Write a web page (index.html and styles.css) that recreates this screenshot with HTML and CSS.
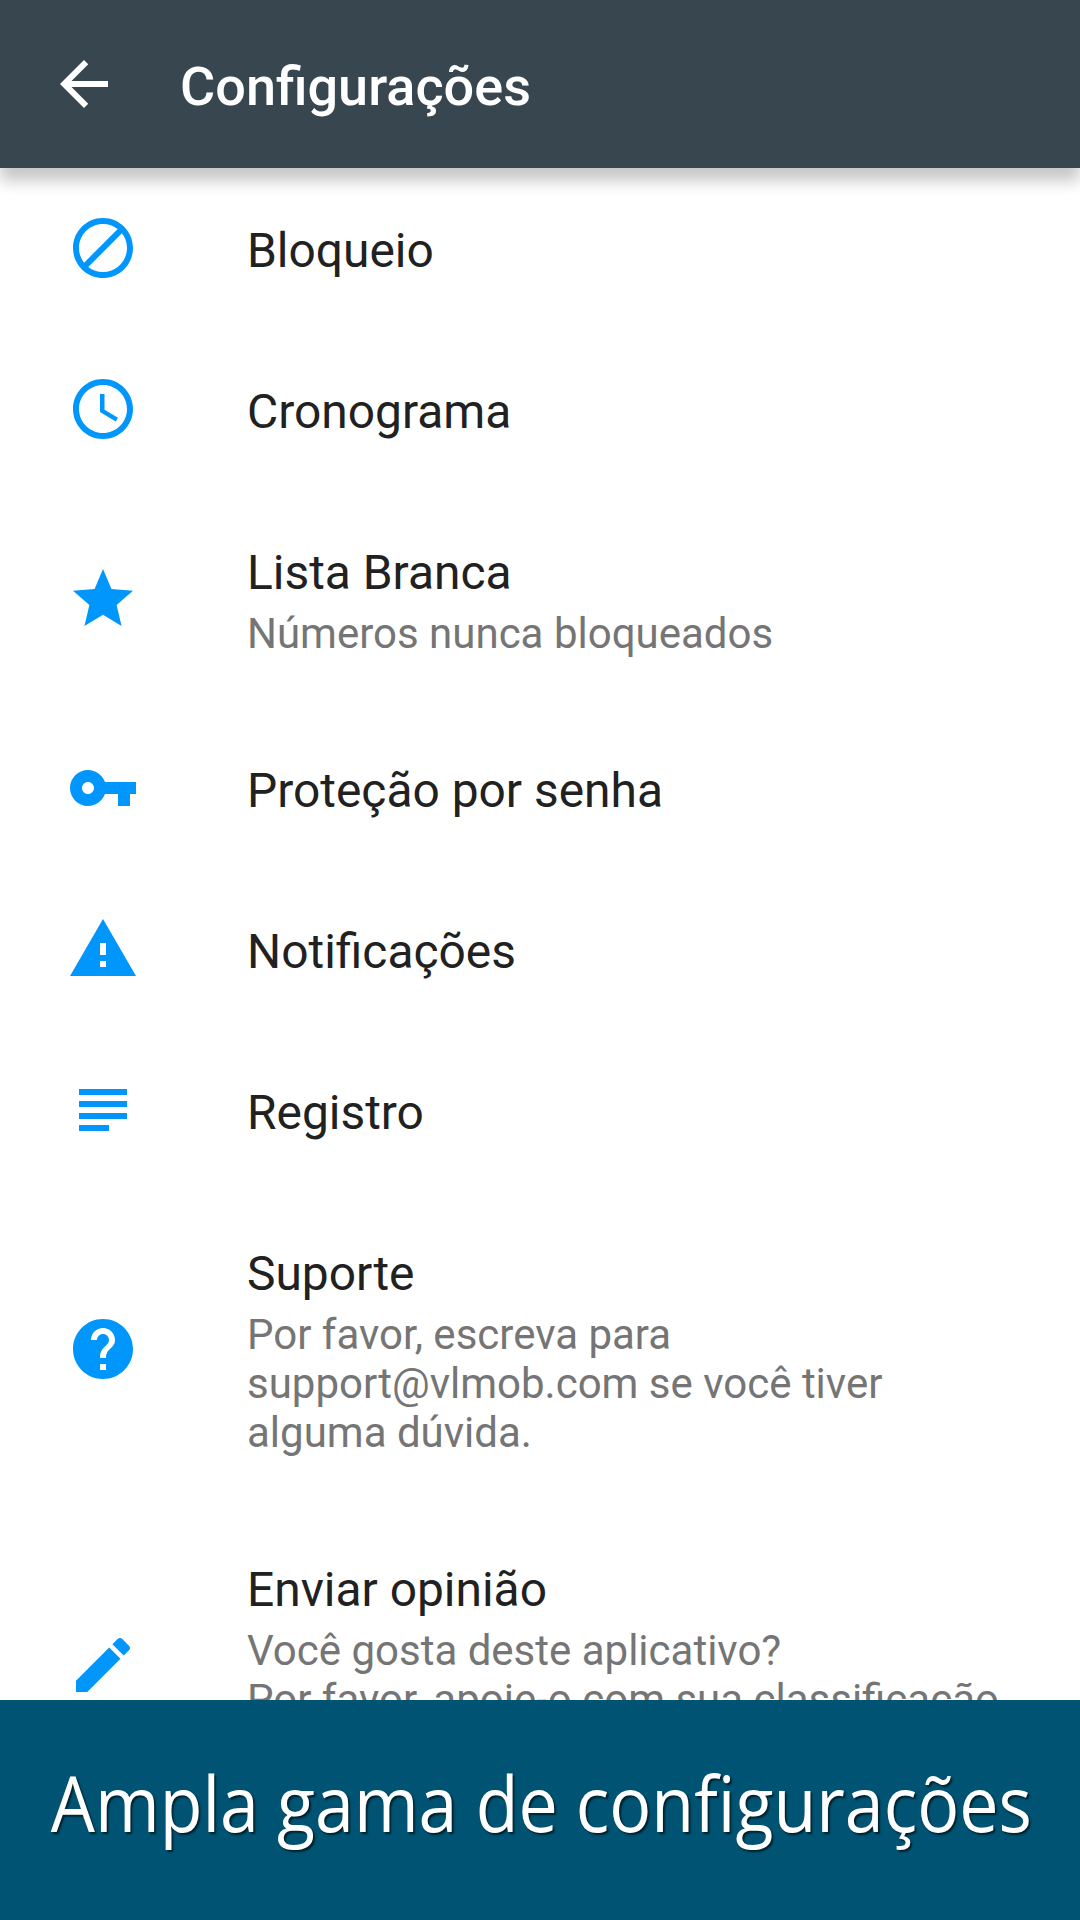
FILE: index.html
```html
<!DOCTYPE html>
<html lang="pt-BR">
<head>
<meta charset="utf-8">
<title>Configurações</title>
<link rel="stylesheet" href="styles.css">
</head>
<body>
<div class="screen">
  <header class="appbar">
    <svg class="back" viewBox="0 0 24 24"><path d="M20 11H7.83l5.59-5.59L12 4l-8 8 8 8 1.41-1.41L7.83 13H20v-2z"/></svg>
    <h1 class="title">Configurações</h1>
  </header>
  <main class="list">
    <div class="item single">
      <svg class="icon" viewBox="0 0 24 24"><path d="M12 2C6.48 2 2 6.48 2 12s4.48 10 10 10 10-4.48 10-10S17.52 2 12 2zM4 12c0-4.42 3.58-8 8-8 1.85 0 3.55.63 4.9 1.69L5.69 16.9C4.63 15.55 4 13.85 4 12zm8 8c-1.85 0-3.55-.63-4.9-1.69L18.31 7.1C19.37 8.45 20 10.15 20 12c0 4.42-3.58 8-8 8z"/></svg>
      <div class="text"><div class="name">Bloqueio</div></div>
    </div>
    <div class="item single">
      <svg class="icon" viewBox="0 0 24 24"><path d="M11.99 2C6.47 2 2 6.48 2 12s4.47 10 9.99 10C17.52 22 22 17.52 22 12S17.52 2 11.99 2zM12 20c-4.42 0-8-3.58-8-8s3.58-8 8-8 8 3.58 8 8-3.58 8-8 8zm.5-13H11v6l5.25 3.15.75-1.23-4.5-2.67z"/></svg>
      <div class="text"><div class="name">Cronograma</div></div>
    </div>
    <div class="item">
      <svg class="icon" viewBox="0 0 24 24"><path d="M12 17.27L18.18 21l-1.64-7.03L22 9.24l-7.19-.61L12 2 9.19 8.63 2 9.24l5.46 4.73L5.82 21z"/></svg>
      <div class="text"><div class="name">Lista Branca</div><div class="summary">Números nunca bloqueados</div></div>
    </div>
    <div class="item single">
      <svg class="icon" viewBox="0 0 24 24"><path d="M12.65 10C11.83 7.67 9.61 6 7 6c-3.31 0-6 2.69-6 6s2.69 6 6 6c2.61 0 4.83-1.67 5.65-4H17v4h4v-4h2v-4H12.65zM7 14c-1.1 0-2-.9-2-2s.9-2 2-2 2 .9 2 2-.9 2-2 2z"/></svg>
      <div class="text"><div class="name">Proteção por senha</div></div>
    </div>
    <div class="item single">
      <svg class="icon" viewBox="0 0 24 24"><path d="M1 21h22L12 2 1 21zm12-3h-2v-2h2v2zm0-4h-2v-4h2v4z"/></svg>
      <div class="text"><div class="name">Notificações</div></div>
    </div>
    <div class="item single">
      <svg class="icon" viewBox="0 0 24 24"><path d="M14 17H4v2h10v-2zm6-8H4v2h16V9zM4 15h16v-2H4v2zM4 5v2h16V5H4z"/></svg>
      <div class="text"><div class="name">Registro</div></div>
    </div>
    <div class="item">
      <svg class="icon" viewBox="0 0 24 24"><path d="M12 2C6.48 2 2 6.48 2 12s4.48 10 10 10 10-4.48 10-10S17.52 2 12 2zm1 17h-2v-2h2v2zm2.07-7.75l-.9.92C13.45 12.9 13 13.5 13 15h-2v-.5c0-1.1.45-2.1 1.17-2.83l1.24-1.26c.37-.36.59-.86.59-1.41 0-1.1-.9-2-2-2s-2 .9-2 2H8c0-2.21 1.79-4 4-4s4 1.79 4 4c0 .88-.36 1.68-.93 2.25z"/></svg>
      <div class="text"><div class="name">Suporte</div><div class="summary">Por favor, escreva para<br>support@vlmob.com se você tiver<br>alguma dúvida.</div></div>
    </div>
    <div class="item">
      <svg class="icon" viewBox="0 0 24 24"><path d="M3 17.25V21h3.75L17.81 9.94l-3.75-3.75L3 17.25zM20.71 7.04c.39-.39.39-1.02 0-1.41l-2.34-2.34c-.39-.39-1.02-.39-1.41 0l-1.83 1.83 3.75 3.75 1.83-1.83z"/></svg>
      <div class="text last"><div class="name">Enviar opinião</div><div class="summary">Você gosta deste aplicativo?<br>Por favor, apoie-o com sua classificação</div></div>
    </div>
  </main>
  <footer class="banner"><span class="caption">Ampla gama de configurações</span></footer>
</div>
</body>
</html>
```
FILE: styles.css
```css
body {
  margin: 0;
  font-family: Roboto, sans-serif;
}

.screen {
  display: flex;
  flex-direction: column;
  width: 1080px;
  height: 1920px;
  overflow: hidden;
  background: #fff;
}

.appbar {
  position: relative;
  z-index: 1;
  flex: none;
  display: flex;
  align-items: center;
  height: 168px;
  box-sizing: border-box;
  padding-left: 48px;
  background: #38474f;
  box-shadow: 0 13px 14px rgba(0, 0, 0, .22);
}

.back {
  width: 72px;
  height: 72px;
  fill: #fff;
}

.title {
  margin: 6px 0 0 60px;
  font-size: 54px;
  font-weight: 500;
  line-height: 64px;
  color: #fff;
}

.list {
  flex: 1;
  min-height: 0;
  overflow: hidden;
}

.item {
  display: flex;
  align-items: center;
}

.icon {
  flex: none;
  width: 72px;
  height: 72px;
  margin: 0 108px 0 67px;
  fill: #0096fb;
}

.single .icon {
  margin-bottom: 1px;
}

.text {
  padding: 50px 0 44px;
}

.last {
  padding-bottom: 93px;
}

.name {
  font-size: 47.9px;
  line-height: 67px;
  color: #212121;
}

.summary {
  padding: 2px 0 6px;
  font-size: 42px;
  line-height: 49px;
  color: #757575;
}

.banner {
  position: relative;
  z-index: 1;
  flex: none;
  display: flex;
  align-items: center;
  justify-content: center;
  height: 220px;
  background: #005372;
}

.caption {
  margin: 0 0 15px 2px;
  font-family: "Open Sans", sans-serif;
  font-size: 77px;
  color: #fff;
  white-space: nowrap;
  text-shadow: 2px 2px 2px rgba(0, 0, 0, .6);
  transform: scaleX(.908);
}
```
